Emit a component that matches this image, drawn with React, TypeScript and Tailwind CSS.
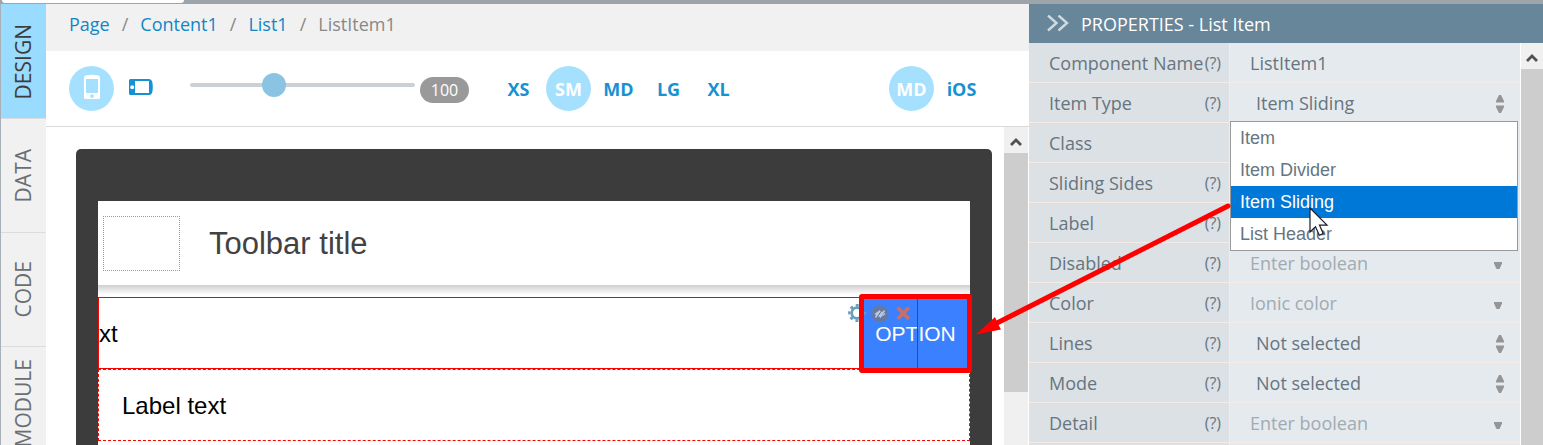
import React, { useState } from 'react';

type Field = {
  label: string;
  help?: boolean;
  kind: 'text' | 'select' | 'combo';
  value?: string;
  placeholder?: string;
  options?: string[];
};

const tabs = ['DESIGN', 'DATA', 'CODE', 'MODULE'];
const crumbs = ['Page', 'Content1', 'List1'];
const sizes = ['XS', 'SM', 'MD', 'LG', 'XL'];
const platforms = ['MD', 'iOS'];
const itemTypes = ['Item', 'Item Divider', 'Item Sliding', 'List Header'];

const fields: Field[] = [
  { label: 'Component Name', help: true, kind: 'text', value: 'ListItem1' },
  { label: 'Item Type', help: true, kind: 'select', value: 'Item Sliding', options: itemTypes },
  { label: 'Class', kind: 'text' },
  { label: 'Sliding Sides', help: true, kind: 'text' },
  { label: 'Label', help: true, kind: 'text' },
  { label: 'Disabled', help: true, kind: 'combo', placeholder: 'Enter boolean' },
  { label: 'Color', help: true, kind: 'combo', placeholder: 'Ionic color' },
  { label: 'Lines', help: true, kind: 'select', value: 'Not selected', options: ['Not selected'] },
  { label: 'Mode', help: true, kind: 'select', value: 'Not selected', options: ['Not selected'] },
  { label: 'Detail', help: true, kind: 'combo', placeholder: 'Enter boolean' },
];

const ScrollUp: React.FC = () => (
  <button type="button" aria-label="Scroll up" className="flex h-[26px] w-full shrink-0 items-center justify-center bg-[#f0f0f0]">
    <svg width="14" height="10" viewBox="0 0 14 10" className="mt-1">
      <path d="M2 8 7 3 12 8" fill="none" stroke="#505050" strokeWidth="2.8" />
    </svg>
  </button>
);

const ChoiceGroup: React.FC<{ items: string[]; initial: string }> = ({ items, initial }) => {
  const [active, setActive] = useState(initial);
  return (
    <div className="flex gap-[5px]">
      {items.map((item) => (
        <button
          key={item}
          type="button"
          onClick={() => setActive(item)}
          className={
            item === active
              ? 'size-[45px] rounded-full bg-[#a6e0ff] text-lg font-bold text-white'
              : 'size-[45px] rounded-full text-lg font-bold text-[#1692d2]'
          }
        >
          {item}
        </button>
      ))}
    </div>
  );
};

const SideTabs: React.FC = () => (
  <nav className="flex w-[46px] shrink-0 flex-col border-l border-[#a9b1b8] bg-[#f1f1f1]">
    {tabs.map((tab, idx) => (
      <button
        key={tab}
        type="button"
        className={
          idx === 0
            ? 'flex h-[114px] shrink-0 items-center justify-center bg-[#99dcff] pt-px text-[21px] text-[#3c3c3c]'
            : 'flex h-[114px] shrink-0 items-center justify-center border-t border-[#dcdcdc] text-[21px] text-[#6a6f73]'
        }
      >
        <span className="rotate-180 [writing-mode:vertical-rl]">{tab}</span>
      </button>
    ))}
  </nav>
);

const Breadcrumb: React.FC = () => (
  <nav className="flex h-[47px] shrink-0 items-center gap-3 bg-[#f1f1f1] pb-2 pl-[23px] text-lg text-[#888]">
    {crumbs.map((crumb) => (
      <React.Fragment key={crumb}>
        <a href="#" className="text-[#0f87c6]">{crumb}</a>
        <span>/</span>
      </React.Fragment>
    ))}
    <span>ListItem1</span>
  </nav>
);

const DeviceBar: React.FC = () => {
  const [zoom, setZoom] = useState(36);
  return (
    <div className="flex h-[76px] shrink-0 items-center border-b border-[#d9d9d9] pr-[45px] pl-[23px]">
      <button type="button" aria-label="Portrait" className="flex size-[45px] items-center justify-center rounded-full bg-[#a6e0ff]">
        <svg width="18" height="26" viewBox="0 0 18 26" className="-mt-1">
          <path
            fillRule="evenodd"
            fill="#fff"
            d="M1 4Q1 1.5 4 1.2 9 .4 14 1.2 17 1.5 17 4V23.500Q17 25 15.500 25H2.500Q1 25 1 23.500ZM3 5V19H15V5ZM9 20.200A1.900 1.900 0 1 0 9 24 1.900 1.900 0 1 0 9 20.200Z"
          />
        </svg>
      </button>
      <button type="button" aria-label="Landscape" className="mb-[3px] ml-[15px]">
        <svg width="24" height="16" viewBox="0 0 24 16">
          <path
            fillRule="evenodd"
            fill="#1692d2"
            d="M1.500 0H20Q22.500 0 23.200 2.500 24.400 8 23.200 13.500 22.500 16 20 16H1.500Q0 16 0 14.500V1.500Q0 0 1.500 0ZM6 2V14H20V2ZM3.200 6.200A2 2 0 1 0 3.200 10.200 2 2 0 1 0 3.200 6.200Z"
          />
        </svg>
      </button>
      <input
        type="range"
        aria-label="Zoom"
        value={zoom}
        onChange={(e) => setZoom(Number(e.target.value))}
        className="mb-2 ml-[37px] h-6 w-[225px] appearance-none bg-transparent [&::-webkit-slider-runnable-track]:h-1 [&::-webkit-slider-runnable-track]:rounded-full [&::-webkit-slider-runnable-track]:bg-[#cbd0d4] [&::-webkit-slider-thumb]:-mt-[10px] [&::-webkit-slider-thumb]:size-6 [&::-webkit-slider-thumb]:appearance-none [&::-webkit-slider-thumb]:rounded-full [&::-webkit-slider-thumb]:bg-[#8bc4e2]"
      />
      <span className="mt-[3px] ml-[5px] flex h-[26px] w-[49px] items-center justify-center rounded-full bg-[#999] text-base text-white">100</span>
      <div className="ml-[27px]">
        <ChoiceGroup items={sizes} initial="SM" />
      </div>
      <div className="ml-auto">
        <ChoiceGroup items={platforms} initial="MD" />
      </div>
    </div>
  );
};

const ItemTools: React.FC = () => (
  <svg width="68" height="20" viewBox="0 0 68 20" className="absolute -top-[3px] -left-[13px]">
    <g fill="none" stroke="#6a9fbb">
      <circle cx="9" cy="9" r="5.300" strokeWidth="2.800" />
      <circle cx="9" cy="9" r="7.600" strokeWidth="2.600" strokeDasharray="3 2.970" strokeDashoffset="1.500" />
    </g>
    <path d="M11 0h5v20h-5z" fill="#f00" />
    <circle cx="32" cy="10" r="8.500" fill="#66799f" />
    <path d="M26.500 10q5.500-6 11 0-5.500 6-11 0Z" fill="#b9c8e6" />
    <path d="M28.500 14 34 6M31.500 15 37 7" stroke="#66799f" strokeWidth="1.200" />
    <path d="M27.500 13.500 32 6.500M32 13.500 36.500 6.500" stroke="#b9c8e6" strokeWidth="1.400" />
    <path d="M49.500 3.500 61 15M61 3.500 49.500 15" stroke="#c5706f" strokeWidth="3.600" />
  </svg>
);

const Canvas: React.FC = () => (
  <div className="flex min-h-0 flex-1 pr-px">
    <div className="flex min-w-0 flex-1 px-[30px] pt-[22px] pr-3">
      <div className="flex min-w-0 flex-1 flex-col rounded-t-[5px] bg-[#3c3c3c] px-[22px] pt-[52px]">
        <div className="flex-1 bg-white font-['Liberation_Sans',Arial,sans-serif]">
          <header className="flex h-21 items-center pl-[5px]">
            <div className="h-[55px] w-[77px] border border-dotted border-[#999]" />
            <h1 className="ml-[29px] pt-[2px] text-[31px] text-[#424242]">Toolbar title</h1>
          </header>
          <div className="h-3 bg-linear-to-b from-[#cfcfcf] to-white to-80%" />
          <div className="relative flex h-[72px] items-center border border-[#ff0000] pt-[2px] text-2xl">
            <span>xt</span>
            <div className="absolute -top-1 -right-[3px] flex h-[79px] w-[113px] items-center justify-center rounded-[3px] border-[5px] border-[#ff0000] bg-[#3a80ff] text-[21px] text-white">
              <span>OPTION</span>
              <div className="absolute inset-y-0 left-[53px] w-px bg-[#ff0000]" />
              <div className="absolute top-2 -left-[3px]">
                <ItemTools />
              </div>
            </div>
          </div>
          <div className="flex h-[72px] items-center border border-dashed border-[#ff0000] pt-[2px] pl-[23px] text-2xl">Label text</div>
        </div>
      </div>
    </div>
    <div className="flex w-6 shrink-0 flex-col bg-[#f0f0f0]">
      <ScrollUp />
      <div className="h-[239px] bg-[#cdcdcd]" />
    </div>
  </div>
);

const SortArrows: React.FC = () => (
  <svg width="8" height="18" viewBox="0 0 8 18" className="pointer-events-none absolute top-3 right-4">
    <path d="M3 0H5L8 6V7.500H0V6ZM0 10.500H8V12L5 18H3L0 12Z" fill="#959595" />
  </svg>
);

const DownArrow: React.FC = () => (
  <svg width="8" height="7" viewBox="0 0 8 7" className="pointer-events-none absolute top-[19px] right-[18px]">
    <path d="M0 0H8V1.500L5.500 7H2.500L0 1.500Z" fill="#959595" />
  </svg>
);

const TypeMenu: React.FC = () => (
  <ul role="listbox" aria-label="Item Type" className="absolute top-[38px] right-[2px] left-0 z-20 border border-[#999] bg-white font-['Liberation_Sans',Arial,sans-serif] text-lg">
    {itemTypes.map((type) => (
      <li
        key={type}
        role="option"
        aria-selected={type === 'Item Sliding'}
        className={
          type === 'Item Sliding'
            ? 'flex h-8 items-center bg-[#0078d7] px-[9px] text-white'
            : 'flex h-8 items-center px-[9px] text-[#66757f]'
        }
      >
        {type}
      </li>
    ))}
    <svg width="20" height="30" viewBox="0 0 20 30" className="absolute top-[85px] left-[78px]">
      <path d="M1 1V25L6.500 19.800 10.300 28.300 14.200 26.500 10.500 18.200H18Z" fill="#fff" stroke="#1a1a2a" strokeWidth="1.200" />
    </svg>
  </ul>
);

const FieldRow: React.FC<{ field: Field; id: string }> = ({ field, id }) => (
  <div className="flex h-10 shrink-0">
    <label htmlFor={id} className="flex w-[201px] items-center justify-between border-r border-b border-[#f5ece6] bg-[#dce1e5] pr-2 pl-5">
      <span className="whitespace-nowrap">{field.label}</span>
      {field.help && <span className="text-base">(?)</span>}
    </label>
    <div className="relative min-w-0 flex-1 border-b border-[#f5ece6] bg-[#e5eaee]">
      {field.kind === 'select' ? (
        <>
          <select id={id} defaultValue={field.value} className="size-full appearance-none bg-transparent pl-[26px] outline-none">
            {field.options?.map((option) => <option key={option}>{option}</option>)}
          </select>
          <SortArrows />
        </>
      ) : (
        <input
          id={id}
          type="text"
          defaultValue={field.value}
          placeholder={field.placeholder}
          className="size-full bg-transparent pl-5 outline-none placeholder:text-[#a0abb2]"
        />
      )}
      {field.kind === 'combo' && <DownArrow />}
      {field.label === 'Item Type' && <TypeMenu />}
    </div>
  </div>
);

const Properties: React.FC = () => (
  <aside className="relative flex w-[514px] shrink-0 flex-col">
    <h2 className="flex h-[39px] shrink-0 items-center bg-[#68869a] pl-[18px] text-lg text-white">
      <svg width="22" height="18" viewBox="0 0 22 18" className="mr-3">
        <path d="M1 .500 9.500 8 1 15.500M11.500 .500 20 8 11.500 15.500" fill="none" stroke="#d0dae1" strokeWidth="2.400" />
      </svg>
      PROPERTIES - List Item
    </h2>
    <div className="flex min-h-0 flex-1">
      <div className="flex min-w-0 flex-1 flex-col overflow-hidden border-r border-white text-lg text-[#66757f]">
        {fields.map((field, idx) => <FieldRow key={field.label} field={field} id={`prop-${idx}`} />)}
        <div className="flex flex-1 bg-[#e5eaee]">
          <div className="w-[201px] border-r border-[#f5ece6] bg-[#dce1e5]" />
        </div>
      </div>
      <div className="flex w-[22px] shrink-0 flex-col bg-[#cdcdcd]">
        <ScrollUp />
      </div>
    </div>
    {/* callout from the chosen type to the option button */}
    <svg width="260" height="140" viewBox="0 0 260 140" className="pointer-events-none absolute top-[196px] -left-[56px] z-30">
      <path d="M255 6 24 123" stroke="#f00" strokeWidth="5" strokeLinecap="round" />
      <path d="M3 134.500 22 117 24.500 123 28 129.500Z" fill="#f00" />
    </svg>
  </aside>
);

const App: React.FC = () => (
  <div className="flex h-screen flex-col overflow-hidden bg-white font-['Open_Sans',sans-serif]">
    <div className="h-1 shrink-0 bg-[#9da5ab]">
      <div className="ml-[2px] h-[3px] w-[182px] rounded-b-sm bg-white" />
    </div>
    <div className="flex min-h-0 flex-1">
      <SideTabs />
      <main className="flex min-w-0 flex-1 flex-col">
        <Breadcrumb />
        <DeviceBar />
        <Canvas />
      </main>
      <Properties />
    </div>
  </div>
);

export default App;
